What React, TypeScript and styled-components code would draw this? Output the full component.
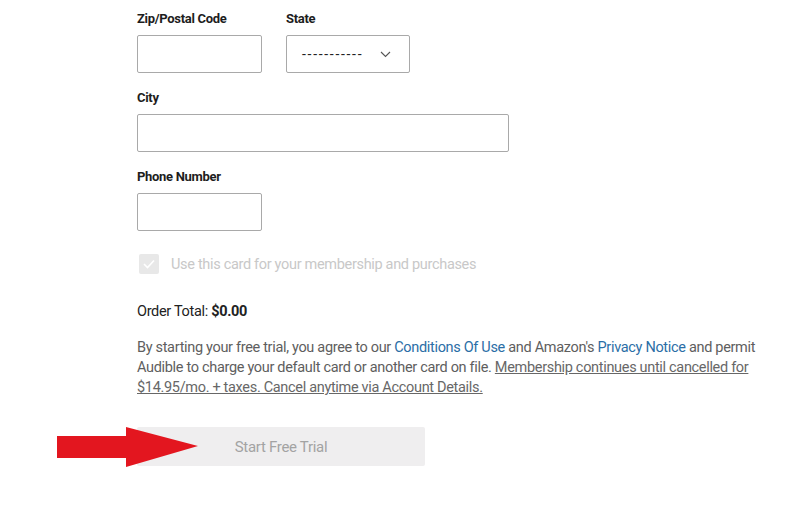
import React from 'react'
import styled, {createGlobalStyle} from "styled-components";

const GlobalStyle = createGlobalStyle`
    body {
        margin: 0;
        background: #ffffff;
        font-family: Roboto, "Liberation Sans", sans-serif;
    }
`

const Page = styled.div`
    width: 800px;
    height: 506px;
    overflow: hidden;
    padding: 11px 0 0 137px;
    box-sizing: border-box;
`

const Row = styled.div<{ $gap?: number }>`
    display: flex;
    gap: ${p => p.$gap ?? 24}px;
`

const Field = styled.div<{ $top?: number }>`
    display: flex;
    flex-direction: column;
    margin-top: ${p => p.$top ?? 0}px;
`

const Label = styled.label`
    font-size: 13px;
    font-weight: 700;
    letter-spacing: -0.3px;
    line-height: 16px;
    color: #1d1d1d;
    margin-bottom: 8px;
`

const Input = styled.div<{ $width: number }>`
    width: ${p => p.$width}px;
    height: 38px;
    box-sizing: border-box;
    border: 1px solid #a9a9a9;
    border-radius: 2px;
    background: #fff;
`

const Select = styled(Input)`
    display: flex;
    align-items: center;
    justify-content: space-between;
    padding: 0 18px 0 15px;
    font-size: 14px;
    color: #222;
    letter-spacing: 1.7px;
`

const Check = styled.div`
    display: flex;
    align-items: center;
    gap: 12px;
    margin: 23px 0 0 2px;
    height: 20px;
`

const CheckBox = styled.div`
    width: 20px;
    height: 20px;
    border-radius: 2px;
    background: #e8e8e8;
    display: flex;
    align-items: center;
    justify-content: center;
`

const CheckText = styled.span`
    font-size: 14.5px;
    letter-spacing: -0.32px;
    color: #c8c8c8;
`

const Total = styled.div`
    margin-top: 28px;
    font-size: 14.5px;
    letter-spacing: -0.32px;
    line-height: 20px;
    color: #222;

    b {
        font-weight: 700;
    }
`

const Terms = styled.p`
    margin: 16px 0 0;
    width: 630px;
    font-size: 14.5px;
    letter-spacing: -0.32px;
    line-height: 20px;
    color: #5e5e5e;
`

const TermLink = styled.a`
    color: #2b6ea6;
    text-decoration: none;
`

const Underlined = styled.span`
    text-decoration: underline;
    color: #676767;
`

const ButtonWrap = styled.div`
    position: relative;
    margin-top: 29px;
    width: 288px;
`

const Button = styled.button`
    width: 288px;
    height: 39px;
    border: none;
    border-radius: 2px;
    background: #efeeef;
    color: #a3a3a3;
    font-family: Roboto, sans-serif;
    font-size: 15px;
    letter-spacing: -0.3px;
`

const Arrow = styled.svg`
    position: absolute;
    left: -80px;
    top: 0;
`

const Chevron = () => (
    <svg width="11" height="7" viewBox="0 0 11 7">
        <path d="M1 1l4.5 4.5L10 1" fill="none" stroke="#555" strokeWidth="1.1"/>
    </svg>
)

const App: React.FC = () => {
    return (
        <Page>
            <GlobalStyle/>
            <Row>
                <Field>
                    <Label>Zip/Postal Code</Label>
                    <Input $width={125}/>
                </Field>
                <Field>
                    <Label>State</Label>
                    <Select $width={124}>
                        <span>-----------</span>
                        <Chevron/>
                    </Select>
                </Field>
            </Row>

            <Field $top={17}>
                <Label>City</Label>
                <Input $width={372}/>
            </Field>

            <Field $top={17}>
                <Label>Phone Number</Label>
                <Input $width={125}/>
            </Field>

            <Check>
                <CheckBox>
                    <svg width="12" height="10" viewBox="0 0 12 10">
                        <path d="M1 5l3.5 3.5L11 1.5" fill="none" stroke="#fff" strokeWidth="1.6"/>
                    </svg>
                </CheckBox>
                <CheckText>Use this card for your membership and purchases</CheckText>
            </Check>

            <Total>Order Total: <b>$0.00</b></Total>

            <Terms>
                By starting your free trial, you agree to our <TermLink>Conditions Of Use</TermLink> and
                Amazon's <TermLink>Privacy Notice</TermLink> and permit Audible to charge your default card or
                another card on file. <Underlined>Membership continues until cancelled for $14.95/mo. + taxes.
                Cancel anytime via Account Details.</Underlined>
            </Terms>

            <ButtonWrap>
                <Button>Start Free Trial</Button>
                <Arrow width="141" height="41" viewBox="0 0 141 41">
                    <polygon points="0,9 69,9 69,0 141,19 69,40 69,31 0,31" fill="#e3161f"/>
                </Arrow>
            </ButtonWrap>
        </Page>
    )
}

export default App;
